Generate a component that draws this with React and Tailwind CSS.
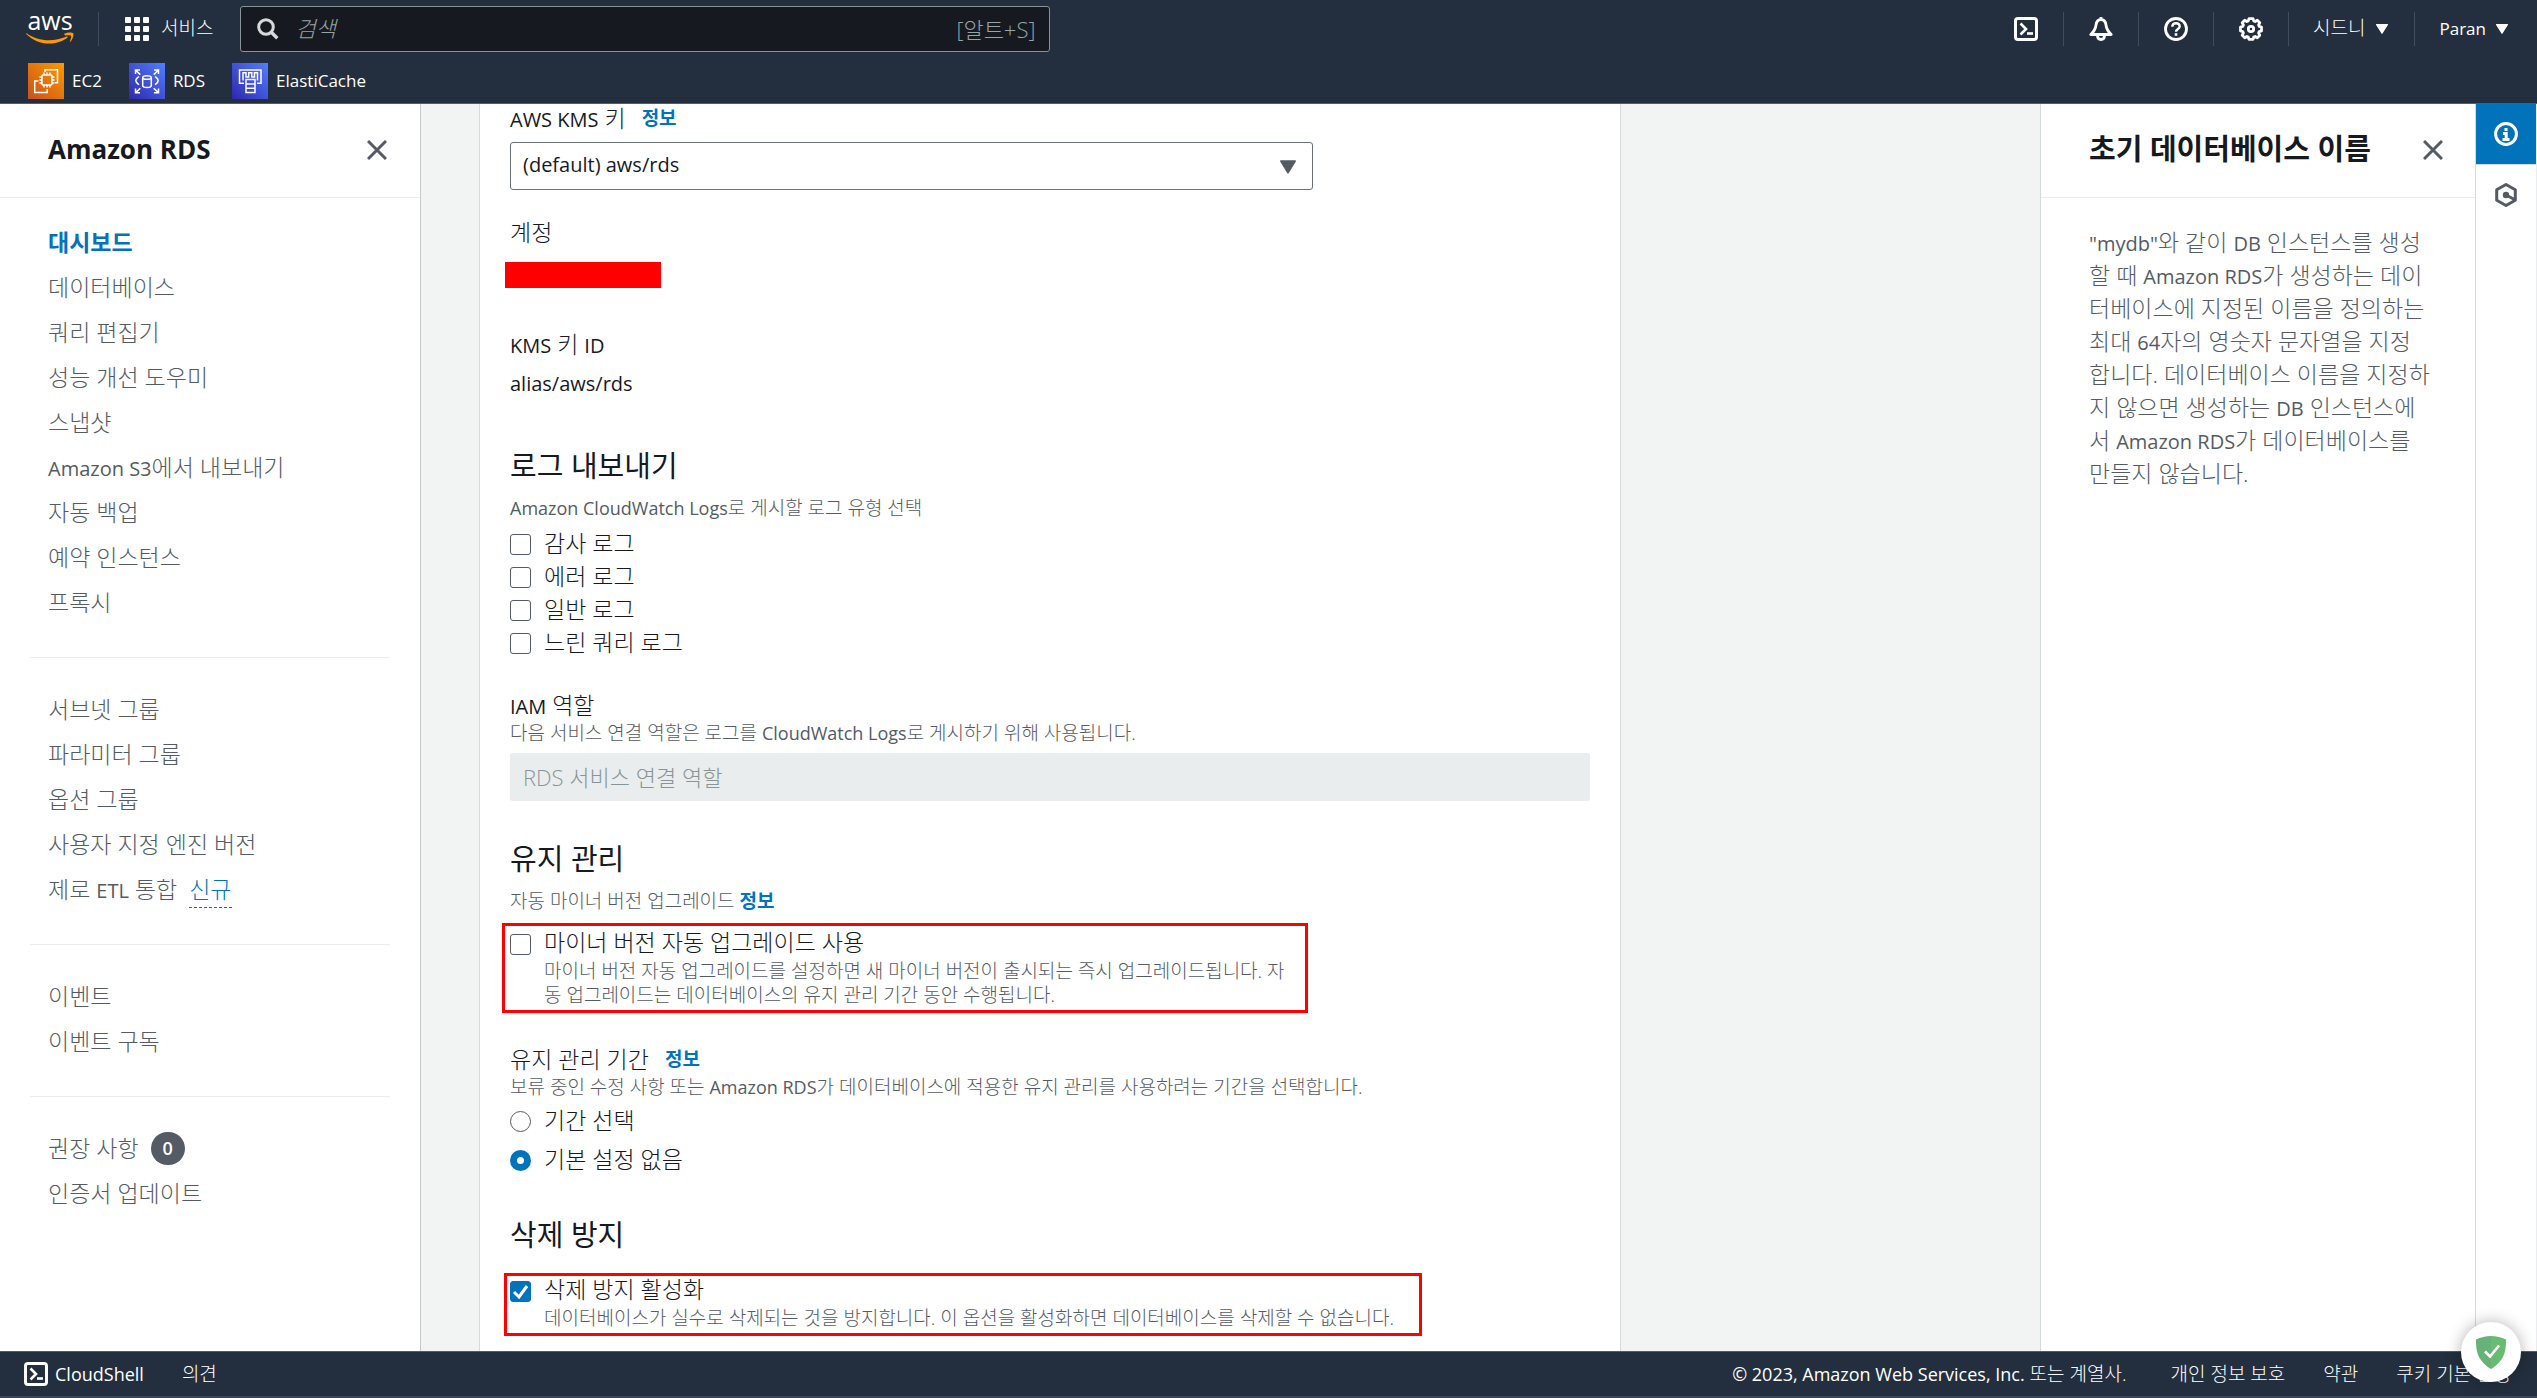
import React, { useState } from "react";
import clsx from "clsx";

// Latin runs are set a little smaller than the Hangul around them
const Ko = ({ children, small }) =>
  children.split(/([A-Za-z0-9/"()©,][A-Za-z0-9/"()©,. ]*[A-Za-z0-9/"()©,.]|[0-9])/).map((part, i) =>
    i % 2 ? (
      <span key={i} className={clsx("leading-none font-normal", small ? "text-[18px]" : "text-[20px]")}>
        {part}
      </span>
    ) : (
      part
    )
  );

const NAV_GROUPS = [
  [
    { label: "대시보드", active: true },
    { label: "데이터베이스" },
    { label: "쿼리 편집기" },
    { label: "성능 개선 도우미" },
    { label: "스냅샷" },
    { label: "Amazon S3에서 내보내기" },
    { label: "자동 백업" },
    { label: "예약 인스턴스" },
    { label: "프록시" },
  ],
  [
    { label: "서브넷 그룹" },
    { label: "파라미터 그룹" },
    { label: "옵션 그룹" },
    { label: "사용자 지정 엔진 버전" },
    { label: "제로 ETL 통합", isNew: true },
  ],
  [{ label: "이벤트" }, { label: "이벤트 구독" }],
  [{ label: "권장 사항", count: 0 }, { label: "인증서 업데이트" }],
];

const LOG_TYPES = ["감사 로그", "에러 로그", "일반 로그", "느린 쿼리 로그"];

/* ---------- icons ---------- */

const Caret = ({ className }) => (
  <svg viewBox="0 0 12 10" className={className} fill="currentColor" aria-hidden="true">
    <path d="M.6 0h10.8c.5 0 .8.5.5.9L6.5 9.6c-.2.4-.8.4-1 0L.1.9C-.2.5.1 0 .6 0z" />
  </svg>
);

const CloseIcon = () => (
  <svg viewBox="0 0 20 20" className="size-5" fill="none" stroke="#545b64" strokeWidth="3" aria-hidden="true">
    <path d="M1 1l18 18M19 1L1 19" />
  </svg>
);

const ShellIcon = () => (
  <svg viewBox="0 0 24 24" className="size-6" fill="none" stroke="currentColor" strokeWidth="3" aria-hidden="true">
    <rect x="1.5" y="1.5" width="21" height="21" rx="2.5" />
    <path d="M6.5 6.500L12 12l-5.500 5.500" strokeWidth="2.6" />
    <path d="M13 16.500h6" strokeWidth="2.6" />
  </svg>
);

const BellIcon = () => (
  <svg viewBox="0 0 24 24" className="size-6" fill="none" stroke="currentColor" strokeWidth="2.8" strokeLinejoin="round" aria-hidden="true">
    <path d="M12 2.500c-3.500 0-4.600 2.600-5 5.500C6.600 12 5 14.500 1.800 17.500h20.400C19 14.500 17.400 12 17 8c-.4-2.900-1.500-5.500-5-5.500zM12 0v3" />
    <path d="M8.500 18.500c0 2.600 1.500 4 3.500 4s3.500-1.400 3.500-4" />
  </svg>
);

const HelpIcon = () => (
  <svg viewBox="0 0 24 24" className="size-6" fill="none" stroke="currentColor" strokeWidth="2.8" aria-hidden="true">
    <circle cx="12" cy="12" r="10.5" />
    <path d="M8.300 9.800C8.300 7.500 9.900 6.200 12 6.200s3.700 1.300 3.700 3.300c0 2.600-3.700 2.600-3.700 5.300" strokeWidth="2.4" />
    <path d="M12 16.200v2.600" strokeWidth="2.6" />
  </svg>
);

const GearIcon = () => (
  <svg viewBox="0 0 24 24" className="size-6" fill="none" stroke="currentColor" strokeWidth="2.8" strokeLinejoin="round" aria-hidden="true">
    <path d="M10 1.600h4l.7 2.300 1.500.6 2.100-1.200 2.500 2.500-1.200 2.100.6 1.500 2.300.7v3.800l-2.300.7-.6 1.500 1.200 2.100-2.500 2.500-2.100-1.200-1.500.6-.7 2.300h-4l-.7-2.300-1.500-.6-2.100 1.200-2.500-2.500 1.200-2.100-.6-1.500-2.300-.7v-3.800l2.300-.7.6-1.500-1.200-2.100 2.500-2.500 2.100 1.200 1.500-.6z" />
    <circle cx="12" cy="12" r="2.7" />
  </svg>
);

const GridIcon = () => (
  <svg viewBox="0 0 24 24" className="size-6" fill="currentColor" aria-hidden="true">
    {[0, 9, 18].map((y) =>
      [0, 9, 18].map((x) => <rect key={`${x}-${y}`} x={x} y={y} width="6" height="6" rx="1" />)
    )}
  </svg>
);

const SearchIcon = () => (
  <svg viewBox="0 0 22 22" className="size-[22px]" fill="none" stroke="#d5dbdb" strokeWidth="3" aria-hidden="true">
    <circle cx="9" cy="9" r="7.3" />
    <path d="M14.300 14.300l6 6" strokeWidth="3.4" />
  </svg>
);

const AwsLogo = () => (
  <span className="flex w-12 flex-col items-center">
    <span className="h-[18px] text-[25px] leading-[12px] font-medium text-white">aws</span>
    <svg viewBox="0 0 48 12" className="h-3 w-12" fill="#ff9900" aria-hidden="true">
      <path d="M.6 1.200C7 6 14.600 8.200 23 8.200c6 0 12-1.300 17.600-3.700.9-.4 1.600.6.8 1.200C36.400 9.500 29.400 11.500 23.200 11.500 14.500 11.500 6.500 8.200.4 2.200-.1 1.700.1.9.6 1.200z" />
      <path d="M38.500 1.600c2.600-1.400 7.500-1.600 8.600-.5 1 1.200-.3 6.300-2.700 8.600-.4.3-.8.1-.6-.3.6-1.500 1.800-4.900 1.200-5.700-.6-.8-4.100-.4-5.700-.2-.5.1-1.400-1.400-.8-1.900z" />
    </svg>
  </span>
);

const ServiceTile = ({ id, from, to, children }) => (
  <svg viewBox="0 0 36 36" className="size-9" fill="none" stroke="#fff" strokeWidth="1.5" aria-hidden="true">
    <defs>
      <linearGradient id={id} x1="0" y1="1" x2="1" y2="0">
        <stop offset="0" stopColor={from} />
        <stop offset="1" stopColor={to} />
      </linearGradient>
    </defs>
    <rect width="36" height="36" fill={`url(#${id})`} stroke="none" />
    {children}
  </svg>
);

const Ec2Icon = () => (
  <ServiceTile id="ec2" from="#c8511b" to="#ff9900">
    <rect x="14" y="12" width="10" height="10" rx="1" />
    <path d="M16 12V9.500M19 12V9.500M22 12V9.500M16 22v2.500M19 22v2.500M22 22v2.500M14 14h-2.500M14 17h-2.500M14 20h-2.500M24 14h2.500M24 17h2.500M24 20h2.500" />
    <path d="M17 9V6.700h12.500v13H27M10.500 18H6.700v11.500h12.500V26" />
  </ServiceTile>
);

const RdsIcon = () => (
  <ServiceTile id="rds" from="#2e27ad" to="#527fff">
    <ellipse cx="18" cy="14.5" rx="4.3" ry="1.8" />
    <path d="M13.700 14.500v8c0 1.100 1.900 2 4.300 2s4.300-.9 4.300-2v-8" />
    <path d="M10 13.500c-2 1.500-3.200 2-3.200 4s1.200 2.700 3.200 4.200M26 13.500c2 1.500 3.200 2 3.200 4s-1.200 2.700-3.200 4.200" />
    <path d="M6.500 11V7H11M6.700 7.200l4.600 4.400M25 7h4.500v4M29.300 7.200l-4.600 4.400M6.500 25.500v4.300H11M6.700 29.600l4.600-4.400M25 29.800h4.500v-4.300M29.300 29.600l-4.600-4.400" />
  </ServiceTile>
);

const ElastiCacheIcon = () => (
  <ServiceTile id="elasticache" from="#2e27ad" to="#527fff">
    <path d="M12 20.300H7.500V7h21.500v13.300H25" />
    <path d="M11 17.500V9.800h3V14h2.700V9.800h3.100V14h2.700V9.800h3v7.700" />
    <path d="M14 16.500h9v13h-9zM14 21h9M14 25.300h9" />
  </ServiceTile>
);

const ShieldBadge = () => (
  <button
    aria-label="보호 상태"
    className="absolute right-4 bottom-3.5 flex size-[60px] items-center justify-center rounded-full bg-white shadow-[0_0_16px_rgba(0,0,0,0.3)]"
  >
    <svg viewBox="0 0 32 33" className="h-[33px] w-8" aria-hidden="true">
      <path d="M16 0C11 0 5.500 1.300 1 3.500c0 11 1 21 15 29.500z" fill="#67b279" />
      <path d="M16 0c5 0 10.500 1.300 15 3.500C31 14.500 30 24.500 16 33z" fill="#68bc71" />
      <path d="M10 15.500l5 5L24 9.500" fill="none" stroke="#fff" strokeWidth="2.6" />
    </svg>
  </button>
);

/* ---------- shell ---------- */

const FAVORITES = [
  { label: "EC2", Icon: Ec2Icon },
  { label: "RDS", Icon: RdsIcon },
  { label: "ElastiCache", Icon: ElastiCacheIcon },
];

const TOOLS = [
  { label: "CloudShell", Icon: ShellIcon },
  { label: "알림", Icon: BellIcon },
  { label: "도움말", Icon: HelpIcon },
  { label: "설정", Icon: GearIcon },
];

const Header = () => (
  <header className="shrink-0 border-b border-[#545b64] bg-[#232f3e] text-white">
    <div className="flex h-[58px] items-center pl-[26px]">
      <a href="#home" aria-label="AWS">
        <AwsLogo />
      </a>
      <span className="ml-6 h-[34px] w-px bg-[#414d5c]" />
      <button className="ml-[26px] flex items-center gap-3 text-[19px] font-light">
        <GridIcon />
        <span className="pb-0.5">서비스</span>
      </button>
      <div className="ml-[27px] flex h-[46px] w-[810px] items-center rounded-[3px] border border-[#879596] bg-[#16191f] pr-3.5 pl-4">
        <SearchIcon />
        <input
          type="search"
          aria-label="검색"
          placeholder="검색"
          className="ml-4 min-w-0 flex-1 bg-transparent pb-0.5 text-[22px] font-light outline-none placeholder:text-[#95a5a6] placeholder:italic"
        />
        <span className="text-[22px] font-light text-[#95a5a6]">[알트+S]</span>
      </div>
      <div className="ml-auto flex items-center">
        {TOOLS.map(({ label, Icon }) => (
          <div key={label} className="flex h-[34px] items-center border-r border-[#414d5c] px-[25px]">
            <button aria-label={label}>
              <Icon />
            </button>
          </div>
        ))}
        <button className="flex h-[34px] items-center gap-2.5 border-r border-[#414d5c] pr-[26px] pl-6 text-[19px] font-light">
          <span className="pb-0.5">시드니</span>
          <Caret className="h-2.5 w-3" />
        </button>
        <button className="flex h-[34px] items-center gap-2.5 pr-[29px] pl-[25px] text-[17px] font-medium">
          Paran
          <Caret className="h-2.5 w-3" />
        </button>
      </div>
    </div>
    <nav className="flex h-[45px] items-start gap-[27px] pt-[5px] pl-7 text-[17px] font-medium">
      {FAVORITES.map(({ label, Icon }) => (
        <a key={label} href={`#${label}`} className="flex items-center gap-2">
          <Icon />
          {label}
        </a>
      ))}
    </nav>
  </header>
);

const SideNav = () => (
  <aside className="z-10 w-[421px] shrink-0 border-r border-[#c6cacc] bg-white">
    <div className="flex h-[94px] items-center justify-between border-b border-[#eaeded] pr-[33px] pb-0.5 pl-12">
      <h2 className="text-[26px] font-bold text-[#16191f]">Amazon RDS</h2>
      <button aria-label="닫기">
        <CloseIcon />
      </button>
    </div>
    <nav className="px-[30px] pt-[22px]">
      {NAV_GROUPS.map((group, i) => (
        <React.Fragment key={i}>
          {i > 0 && <hr className="mt-8 mb-[29px] border-[#eaeded]" />}
          <ul className="pl-[18px]">
            {group.map((item) => (
              <li key={item.label} className="flex h-[45px] items-center">
                <a
                  href="#nav"
                  className={clsx(
                    "text-[23px]",
                    item.active ? "font-bold text-[#0073bb]" : "font-light text-[#545b64]"
                  )}
                >
                  <Ko>{item.label}</Ko>
                </a>
                {item.isNew && (
                  <a
                    href="#new"
                    className="ml-3 border-b border-dashed border-[#0073bb] text-[23px] leading-9 font-light text-[#0073bb]"
                  >
                    신규
                  </a>
                )}
                {item.count !== undefined && (
                  <span className="ml-3 flex h-[33px] w-[34px] items-center justify-center rounded-full bg-[#545b64] text-[18px] font-semibold text-white">
                    {item.count}
                  </span>
                )}
              </li>
            ))}
          </ul>
        </React.Fragment>
      ))}
    </nav>
  </aside>
);

/* ---------- form parts ---------- */

const InfoLink = ({ className }) => (
  <a href="#info" className={clsx("text-[19px] leading-none font-bold text-[#0073bb]", className)}>
    정보
  </a>
);

const SectionTitle = ({ children, className }) => (
  <h2 className={clsx("text-[29px] leading-9 font-normal text-[#16191f]", className)}>{children}</h2>
);

const Hint = ({ children, className, id }) => (
  <p id={id} className={clsx("text-[19px] leading-6 font-light text-[#545b64]", className)}>
    {children}
  </p>
);

const Checkbox = ({ id, label, defaultChecked, className, describedBy }) => {
  const [checked, setChecked] = useState(!!defaultChecked);
  return (
    <div className={clsx("flex items-center gap-[13px]", className)}>
      <span className="relative size-[21px] shrink-0">
        <input
          id={id}
          type="checkbox"
          checked={checked}
          aria-describedby={describedBy}
          onChange={(e) => setChecked(e.target.checked)}
          className="block size-[21px] appearance-none rounded-[3px] border border-[#545b64] bg-white checked:border-[#0073bb] checked:bg-[#0073bb]"
        />
        {checked && (
          <svg viewBox="0 0 21 21" className="pointer-events-none absolute inset-0" fill="none" stroke="#fff" strokeWidth="3" aria-hidden="true">
            <path d="M4 11l5 5 8-11" />
          </svg>
        )}
      </span>
      <label htmlFor={id} className="pb-1">
        {label}
      </label>
    </div>
  );
};

const Radio = ({ id, label, defaultChecked }) => (
  <div className="flex h-[33px] items-center gap-[13px]">
    <input
      id={id}
      type="radio"
      name="window"
      defaultChecked={defaultChecked}
      className="size-[21px] shrink-0 appearance-none rounded-full border border-[#545b64] bg-white checked:border-[7px] checked:border-[#0073bb]"
    />
    <label htmlFor={id} className="pb-1">
      {label}
    </label>
  </div>
);

const SettingsForm = () => (
  <form className="min-h-full w-[1142px] shrink border-x border-[#d5dbdb] bg-white px-[30px] text-[23px] leading-7 font-light text-[#16191f]">
    <div className="flex items-center gap-4">
      <label htmlFor="kms-key">
        <Ko>AWS KMS 키</Ko>
      </label>
      <InfoLink />
    </div>
    <div className="relative mt-2.5 w-[803px] max-w-full">
      <select
        id="kms-key"
        className="block h-12 w-full appearance-none rounded-[3px] border border-[#687078] bg-white px-3 pb-0.5 text-[20px] font-normal"
      >
        <option>(default) aws/rds</option>
      </select>
      <Caret className="pointer-events-none absolute top-[18px] right-[17px] h-3.5 w-4 text-[#545b64]" />
    </div>

    <div className="mt-7">계정</div>
    <div className="mt-4 -ml-[5px] h-[26px] w-[156px] bg-[#ff0000]" />

    <div className="mt-[42px]">
      <Ko>KMS 키 ID</Ko>
    </div>
    <div className="mt-3 text-[20px] font-normal">alias/aws/rds</div>

    <SectionTitle className="mt-[50px]">로그 내보내기</SectionTitle>
    <Hint className="mt-3">
      <Ko small>Amazon CloudWatch Logs로 게시할 로그 유형 선택</Ko>
    </Hint>
    <div className="mt-2">
      {LOG_TYPES.map((label, i) => (
        <Checkbox key={label} id={`log-${i}`} label={label} className="h-[33px]" />
      ))}
    </div>

    <label htmlFor="iam-role" className="mt-[31px] block">
      <Ko>IAM 역할</Ko>
    </label>
    <Hint id="iam-hint" className="mt-0.5">
      <Ko small>다음 서비스 연결 역할은 로그를 CloudWatch Logs로 게시하기 위해 사용됩니다.</Ko>
    </Hint>
    <input
      id="iam-role"
      aria-describedby="iam-hint"
      disabled
      value="RDS 서비스 연결 역할"
      readOnly
      className="mt-2 block h-12 w-full rounded-[3px] bg-[#eaeded] px-[13px] pb-0.5 text-[22px] font-light text-[#879596]"
    />

    <SectionTitle className="mt-10">유지 관리</SectionTitle>
    <Hint className="mt-3">
      자동 마이너 버전 업그레이드 <InfoLink />
    </Hint>
    <div className="mt-2.5 -ml-2 w-[806px] border-[3px] border-[#ff0000] py-[3px] pr-3 pl-[5px]">
      <Checkbox id="auto-minor" label="마이너 버전 자동 업그레이드 사용" className="h-[30px]" describedBy="auto-minor-hint" />
      <Hint id="auto-minor-hint" className="pl-[34px]">
        마이너 버전 자동 업그레이드를 설정하면 새 마이너 버전이 출시되는 즉시 업그레이드됩니다. 자동 업그레이드는 데이터베이스의 유지 관리 기간 동안 수행됩니다.
      </Hint>
    </div>

    <fieldset className="mt-8">
      <legend className="flex items-center gap-4">
        유지 관리 기간
        <InfoLink />
      </legend>
      <Hint className="mt-0.5">
        <Ko small>보류 중인 수정 사항 또는 Amazon RDS가 데이터베이스에 적용한 유지 관리를 사용하려는 기간을 선택합니다.</Ko>
      </Hint>
      <div className="mt-1.5 flex flex-col gap-1.5">
        <Radio id="window-select" label="기간 선택" />
        <Radio id="window-none" label="기본 설정 없음" defaultChecked />
      </div>
    </fieldset>

    <SectionTitle className="mt-10">삭제 방지</SectionTitle>
    <div className="mt-5 -ml-[6px] w-[918px] border-[3px] border-[#ff0000] pb-[3px] pl-[3px]">
      <Checkbox id="delete-guard" label="삭제 방지 활성화" className="h-[30px]" describedBy="delete-guard-hint" defaultChecked />
      <Hint id="delete-guard-hint" className="pl-[34px]">
        데이터베이스가 실수로 삭제되는 것을 방지합니다. 이 옵션을 활성화하면 데이터베이스를 삭제할 수 없습니다.
      </Hint>
    </div>
  </form>
);

const HelpPanel = () => (
  <aside className="w-[436px] shrink-0 border-x border-[#d5dbdb] bg-white">
    <div className="flex h-[94px] items-center justify-between border-b border-[#eaeded] pr-8 pb-0.5 pl-12">
      <h2 className="pb-0.5 text-[29px] font-bold text-[#16191f]">초기 데이터베이스 이름</h2>
      <button aria-label="닫기">
        <CloseIcon />
      </button>
    </div>
    <p className="pt-7 pr-[45px] pl-12 text-[23px] leading-[33px] font-light text-[#545b64]">
      <Ko>
        "mydb"와 같이 DB 인스턴스를 생성할 때 Amazon RDS가 생성하는 데이터베이스에 지정된 이름을 정의하는 최대 64자의 영숫자 문자열을 지정합니다. 데이터베이스 이름을 지정하지 않으면 생성하는 DB 인스턴스에서 Amazon RDS가 데이터베이스를 만들지 않습니다.
      </Ko>
    </p>
  </aside>
);

const ToolRail = () => (
  <div className="w-[61px] shrink-0 border-r border-[#eaeded] bg-white">
    <button aria-label="정보" className="flex h-[60px] w-full items-center justify-center bg-[#0073bb] text-white">
      <svg viewBox="0 0 24 24" className="size-6" fill="none" stroke="currentColor" strokeWidth="3" aria-hidden="true">
        <circle cx="12" cy="12" r="10.4" />
        <path d="M12 6v3M9 11.500h3.200v6M8.500 17.500h7" />
      </svg>
    </button>
    <button aria-label="자습서" className="flex h-[60px] w-full items-center justify-center border-t border-[#d5dbdb] text-[#545b64]">
      <svg viewBox="0 0 24 24" className="size-6" fill="none" stroke="currentColor" strokeWidth="3" strokeLinejoin="round" aria-hidden="true">
        <path d="M12 1.500l9.300 5.300v10.400L12 22.500l-9.300-5.300V6.800z" />
        <circle cx="12" cy="12" r="3.2" fill="currentColor" stroke="none" />
        <path d="M12 12l8.500 4.500" />
      </svg>
    </button>
  </div>
);

const Footer = () => (
  <footer className="relative shrink-0 border-t border-b-2 border-t-[#545b64] border-b-[#3b4559] bg-[#232f3e] text-[19px] font-light text-white">
    <div className="flex h-11 items-center pr-[26px] pl-6">
      <button className="flex items-center gap-[7px] text-[18px] font-medium">
        <ShellIcon />
        CloudShell
      </button>
      <button className="ml-[38px]">의견</button>
      <div className="ml-auto flex items-center gap-[38px]">
        <span className="mr-1.5">
          <Ko small>© 2023, Amazon Web Services, Inc. 또는 계열사.</Ko>
        </span>
        <a href="#privacy">개인 정보 보호</a>
        <a href="#terms">약관</a>
        <a href="#cookies">쿠키 기본 설정</a>
      </div>
    </div>
    <ShieldBadge />
  </footer>
);

export default function App() {
  return (
    <div className="flex h-screen flex-col bg-[#f2f3f3] font-['Open_Sans','Noto_Sans_CJK_KR',sans-serif]">
      <Header />
      <div className="flex min-h-0 flex-1">
        <SideNav />
        <main className="flex min-w-0 flex-1 overflow-hidden pl-[58px]">
          <SettingsForm />
        </main>
        <HelpPanel />
        <ToolRail />
      </div>
      <Footer />
    </div>
  );
}
